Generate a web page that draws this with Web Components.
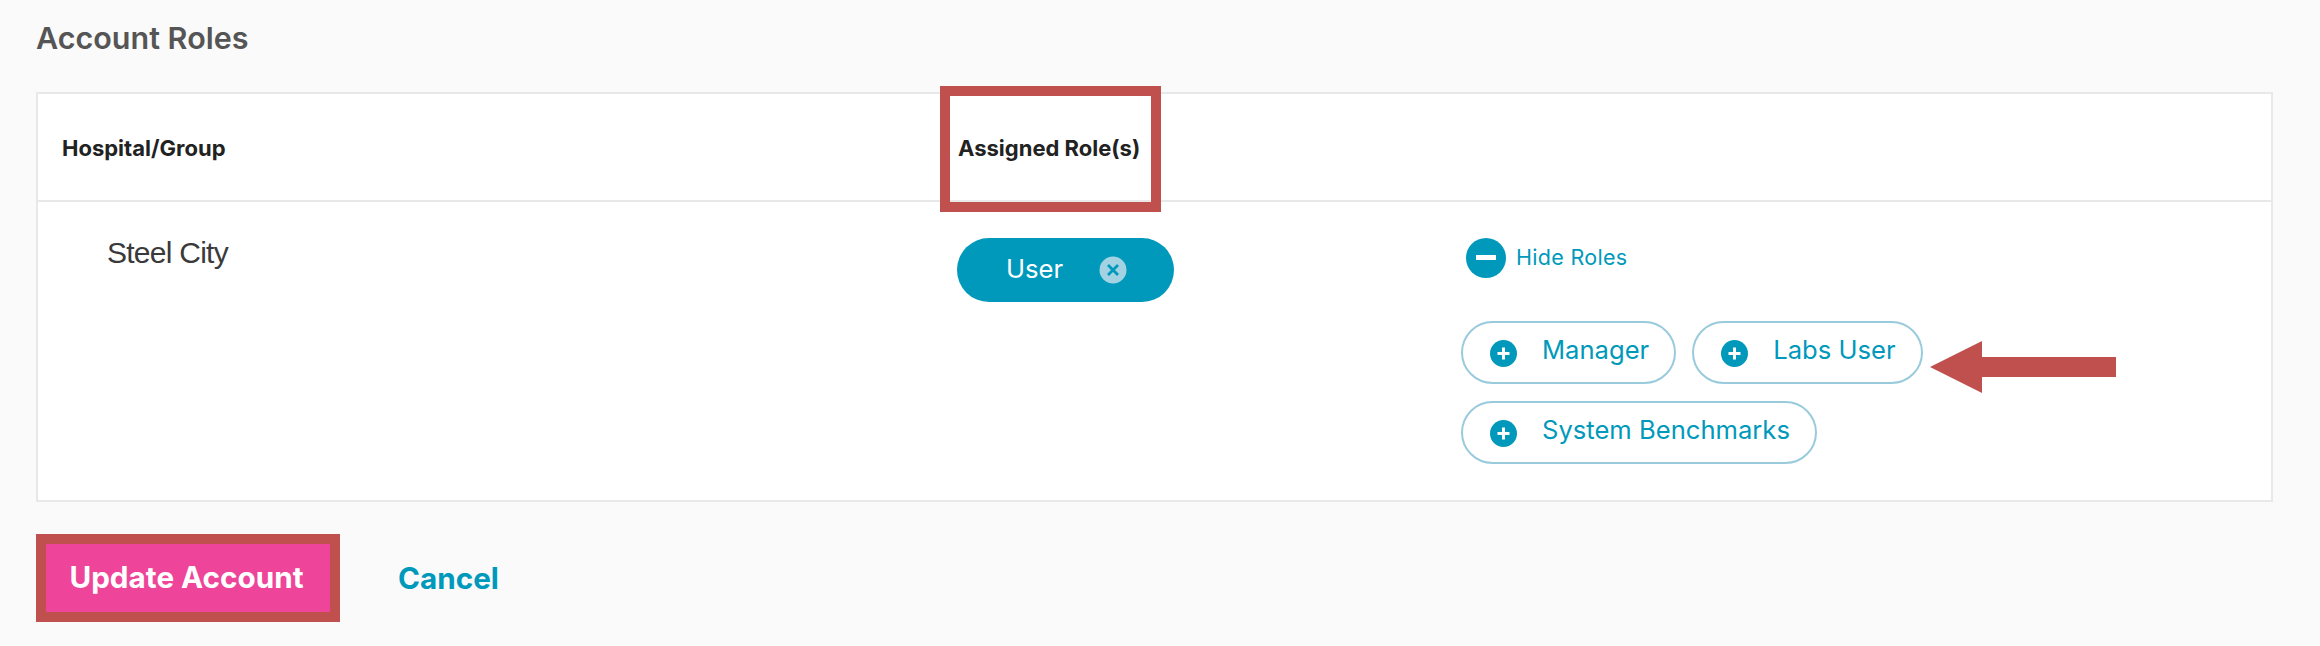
<!DOCTYPE html>
<html>
<head>
<meta charset="utf-8">
<title>Account Roles</title>
<style>
    html, body { margin: 0; background: #fafafa; }
    body { font-family: Inter, "Liberation Sans", sans-serif; }
</style>
</head>
<body>
<account-roles>
    <span slot="title">Account Roles</span>
    <roles-table group="Steel City">
        <role-pill slot="assigned" selected>User</role-pill>
        <hide-toggle slot="toggle">Hide Roles</hide-toggle>
        <role-pill slot="available">Manager</role-pill>
        <role-pill slot="available">Labs User</role-pill>
        <role-pill slot="available">System Benchmarks</role-pill>
    </roles-table>
    <form-actions slot="actions"></form-actions>
</account-roles>

<script>
class AccountRoles extends HTMLElement {
    connectedCallback() {
        this.attachShadow({ mode: 'open' });
        this.shadowRoot.innerHTML = `
            <style>
                :host { display: block; padding: 19px 47px 24px 36px; }
                h2 { margin: 0 0 36px; font: 600 30.5px/37px Inter, sans-serif; color: #555; }
            </style>
            <h2><slot name="title"></slot></h2>
            <slot></slot>
            <slot name="actions"></slot>
        `;
    }
}
customElements.define('account-roles', AccountRoles);

class RolesTable extends HTMLElement {
    connectedCallback() {
        this.attachShadow({ mode: 'open' });
        this.shadowRoot.innerHTML = `
            <style>
                :host { display: block; position: relative; background: #fff; border: 2px solid #e8e8e8; }
                .row { display: grid; grid-template-columns: 919px 504px 1fr; }
                .head { box-sizing: border-box; height: 108px; padding-top: 2px; align-items: center; border-bottom: 2px solid #e8e8e8; font: 700 22px Inter, sans-serif; color: #222; }
                .head div:first-child { padding-left: 24px; }
                .head div:nth-child(2) { padding-left: 1px; }
                .body { height: 298px; box-sizing: border-box; padding-top: 36px; }
                .group { padding: 0 0 0 69px; font: 30px/30px "Liberation Sans", sans-serif; letter-spacing: -0.75px; color: #3a3a3a; }
                .toggle { height: 40px; margin-bottom: 43px; }
                .available { display: flex; flex-wrap: wrap; gap: 17px 16px; }
                .frame { position: absolute; left: 902px; top: -8px; width: 201px; height: 106px; border: 10px solid #c0504d; }
                svg { position: absolute; left: 1892px; top: 247px; }
            </style>
            <div class="row head">
                <div>Hospital/Group</div>
                <div>Assigned Role(s)</div>
                <div></div>
            </div>
            <div class="row body">
                <div class="group">${this.getAttribute('group')}</div>
                <div><slot name="assigned"></slot></div>
                <div>
                    <div class="toggle"><slot name="toggle"></slot></div>
                    <div class="available"><slot name="available"></slot></div>
                </div>
            </div>
            <div class="frame"></div>
            <svg width="186" height="52" viewBox="0 0 186 52"><path d="M0 26 L52 0 V16 H186 V36 H52 V52 Z" fill="#c0504d"/></svg>
        `;
    }
}
customElements.define('roles-table', RolesTable);

class RolePill extends HTMLElement {
    connectedCallback() {
        const selected = this.hasAttribute('selected');
        const icon = selected
            ? `<svg width="28" height="28" viewBox="0 0 28 28"><circle cx="14" cy="14" r="13.5" fill="#a3d3e3"/><path d="M9 9 L19 19 M19 9 L9 19" stroke="#0099bb" stroke-width="2.8" fill="none"/></svg>`
            : `<svg width="27" height="27" viewBox="0 0 27 27"><circle cx="13.5" cy="13.5" r="13.5" fill="#0099bb"/><path d="M13.5 7.5 V19.5 M7.5 13.5 H19.5" stroke="#fff" stroke-width="3" fill="none"/></svg>`;
        this.attachShadow({ mode: 'open' });
        this.shadowRoot.innerHTML = `
            <style>
                :host { display: inline-flex; box-sizing: border-box; height: 63px; align-items: center; border-radius: 32px; font: 400 25.6px Inter, sans-serif; }
                :host(:not([selected])) { color: #0099bb; background: #fff; border: 2px solid #99cbdd; padding: 0 25px 0 27px; gap: 25px; }
                :host(:not([selected])) svg { order: -1; margin-top: 1px; }
                :host(:not([selected])) span { top: -3px; }
                :host([selected]) { color: #fff; background: #0099bb; width: 217px; height: 64px; padding-left: 49px; gap: 36px; }
                span { position: relative; top: -2px; }
            </style>
            <span><slot></slot></span>
            ${icon}
        `;
    }
}
customElements.define('role-pill', RolePill);

class HideToggle extends HTMLElement {
    connectedCallback() {
        this.attachShadow({ mode: 'open' });
        this.shadowRoot.innerHTML = `
            <style>
                :host { display: flex; align-items: center; gap: 10px; padding-left: 5px; height: 40px; color: #0099bb; font: 400 21.5px Inter, sans-serif; letter-spacing: 0.3px; }
                span { position: relative; top: -1px; }
            </style>
            <svg width="40" height="40" viewBox="0 0 40 40"><circle cx="20" cy="20" r="20" fill="#0099bb"/><rect x="10" y="17" width="20" height="5" fill="#fff"/></svg>
            <span><slot></slot></span>
        `;
    }
}
customElements.define('hide-toggle', HideToggle);

class FormActions extends HTMLElement {
    connectedCallback() {
        this.attachShadow({ mode: 'open' });
        this.shadowRoot.innerHTML = `
            <style>
                :host { display: flex; align-items: center; margin-top: 32px; font: 700 29.7px Inter, sans-serif; }
                .update { box-sizing: border-box; width: 304px; height: 88px; border: 10px solid #c0504d; background: #ee4499; color: #fff; display: flex; align-items: center; justify-content: center; padding: 0 3px 2px 0; }
                .cancel { margin-left: 58px; color: #0099bb; }
            </style>
            <div class="update">Update Account</div>
            <div class="cancel">Cancel</div>
        `;
    }
}
customElements.define('form-actions', FormActions);
</script>
</body>
</html>
